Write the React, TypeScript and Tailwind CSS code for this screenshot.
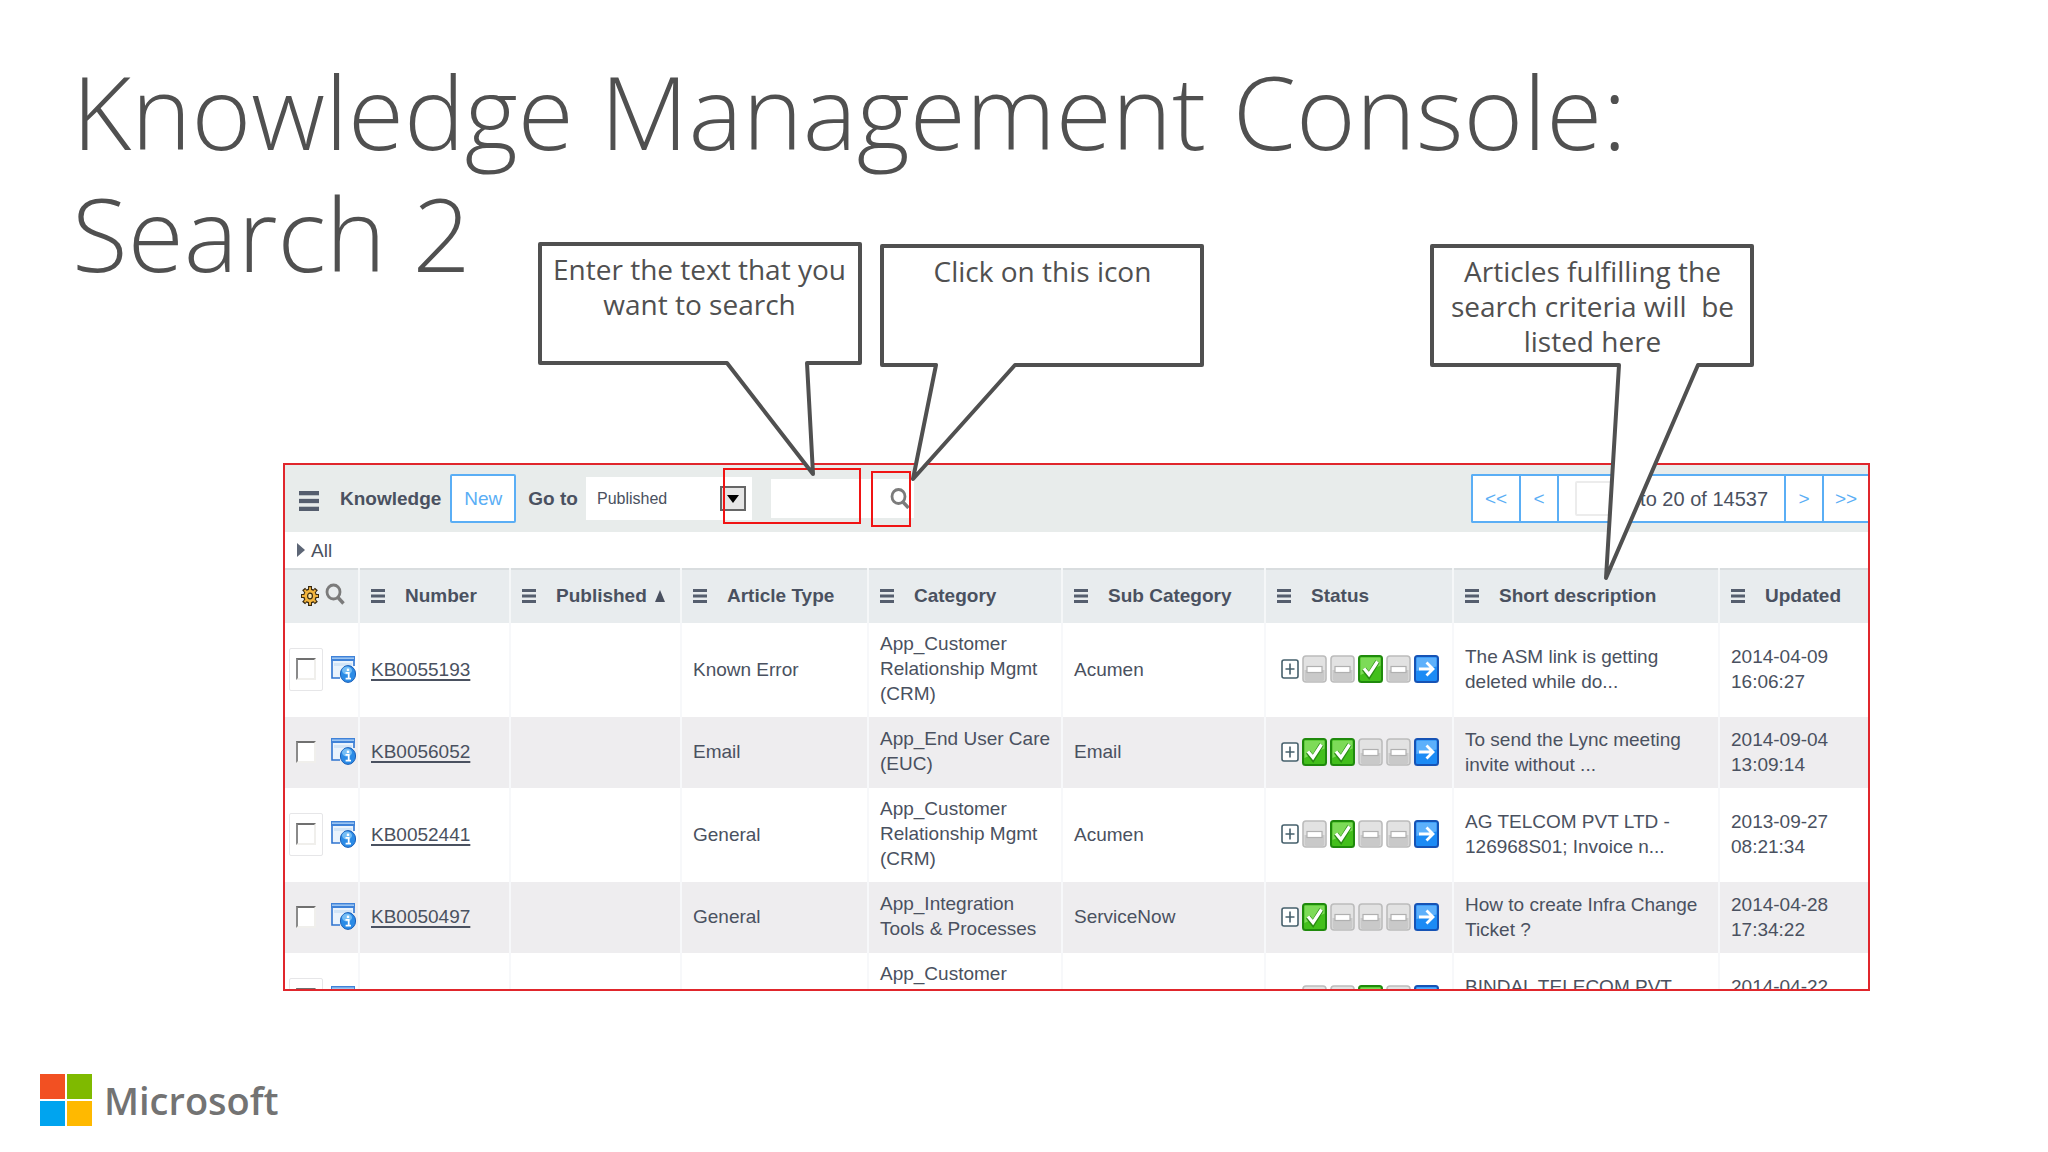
import type { ReactNode } from 'react';

type Step = 'done' | 'skip' | 'next';

const columns = [
  { label: 'Number', width: 'w-[151px]' },
  { label: 'Published', width: 'w-[171px]', sorted: true },
  { label: 'Article Type', width: 'w-[187px]' },
  { label: 'Category', width: 'w-[194px]' },
  { label: 'Sub Category', width: 'w-[203px]' },
  { label: 'Status', width: 'w-[188px]' },
  { label: 'Short description', width: '' },
  { label: 'Updated', width: 'w-[149px]' },
];

const articles: {
  id: string;
  type: string;
  category: string[];
  sub: string;
  steps: Step[];
  description: string[];
  updated: string[];
}[] = [
  {
    id: 'KB0055193',
    type: 'Known Error',
    category: ['App_Customer', 'Relationship Mgmt', '(CRM)'],
    sub: 'Acumen',
    steps: ['skip', 'skip', 'done', 'skip', 'next'],
    description: ['The ASM link is getting', 'deleted while do...'],
    updated: ['2014-04-09', '16:06:27'],
  },
  {
    id: 'KB0056052',
    type: 'Email',
    category: ['App_End User Care', '(EUC)'],
    sub: 'Email',
    steps: ['done', 'done', 'skip', 'skip', 'next'],
    description: ['To send the Lync meeting', 'invite without ...'],
    updated: ['2014-09-04', '13:09:14'],
  },
  {
    id: 'KB0052441',
    type: 'General',
    category: ['App_Customer', 'Relationship Mgmt', '(CRM)'],
    sub: 'Acumen',
    steps: ['skip', 'done', 'skip', 'skip', 'next'],
    description: ['AG TELCOM PVT LTD -', '126968S01; Invoice n...'],
    updated: ['2013-09-27', '08:21:34'],
  },
  {
    id: 'KB0050497',
    type: 'General',
    category: ['App_Integration', 'Tools & Processes'],
    sub: 'ServiceNow',
    steps: ['done', 'skip', 'skip', 'skip', 'next'],
    description: ['How to create Infra Change', 'Ticket ?'],
    updated: ['2014-04-28', '17:34:22'],
  },
  {
    id: '',
    type: '',
    category: ['App_Customer', '', ''],
    sub: '',
    steps: ['skip', 'skip', 'done', 'skip', 'next'],
    description: ['BINDAL TELECOM PVT', ''],
    updated: ['2014-04-22', ''],
  },
];

const MenuIcon = ({ className }: { className: string }) => (
  <svg viewBox="0 0 14 14" preserveAspectRatio="none" className={className} fill="#555e6e" aria-hidden="true">
    <rect width="14" height="3" />
    <rect y="5.5" width="14" height="3" />
    <rect y="11" width="14" height="3" />
  </svg>
);

const SearchIcon = ({ className }: { className: string }) => (
  <svg viewBox="0 0 20 21" className={className} fill="none" stroke="#7b7b7b" aria-hidden="true">
    <ellipse cx="8.5" cy="8.5" rx="6.5" ry="7" strokeWidth="2.8" />
    <path d="M13 14l5.5 6" strokeWidth="3.4" />
  </svg>
);

const GearIcon = () => (
  <svg viewBox="0 0 18 20" className="h-5 w-[18px]" aria-hidden="true">
    <g stroke="#3a2a10" strokeWidth="4">
      <path d="M9 0v20M0 10h18M2.6 3l12.8 14M15.4 3L2.6 17" />
    </g>
    <ellipse cx="9" cy="10" rx="6.8" ry="7.6" fill="#3a2a10" />
    <g stroke="#eeb03c" strokeWidth="2">
      <path d="M9 1.2v17.6M1 10h16M3.5 4l11 12M14.5 4l-11 12" />
    </g>
    <ellipse cx="9" cy="10" rx="5.6" ry="6.2" fill="#f3b63f" />
    <ellipse cx="9" cy="10" rx="2.4" ry="2.8" fill="#f9e3a4" stroke="#3a2a10" strokeWidth="1.2" />
  </svg>
);

const InfoIcon = () => (
  <svg viewBox="0 0 25 27" className="h-[27px] w-[25px] shrink-0" aria-hidden="true">
    <rect x="1" y="1" width="22" height="21" fill="#eaf3fc" />
    <path d="M1 1v21h8M23 1v9" fill="none" stroke="#2f74d0" strokeWidth="1.6" />
    <rect width="24" height="5" fill="#3f82d8" />
    <rect x="1" y="1.4" width="22" height="1.6" fill="#9cc6f2" />
    <rect x="3" y="7" width="18" height="3" fill="#d3e5f7" />
    <ellipse cx="17" cy="18" rx="7.6" ry="8.4" fill="#2b8be6" stroke="#1b5fb8" strokeWidth="1" />
    <ellipse cx="16" cy="14.5" rx="5" ry="4" fill="#74bdf5" />
    <path d="M14.5 16.8h3.2v5.4M14.6 22.6h5.4" fill="none" stroke="#fff" strokeWidth="1.8" />
    <rect x="15.8" y="12.6" width="2.4" height="2.4" fill="#fff" />
  </svg>
);

const StepIcon = ({ step }: { step: Step }) => (
  <svg viewBox="0 0 25 28" className="h-7 w-[25px]" aria-hidden="true">
    {step === 'skip' && (
      <>
        <rect x="1" y="1" width="23" height="26" rx="3" fill="#e2e2e2" stroke="#bcbcbc" strokeWidth="1.6" />
        <path d="M2.5 15h20v9a2 2 0 0 1-2 2h-16a2 2 0 0 1-2-2z" fill="#c9c9c9" />
        <rect x="5" y="11.5" width="15" height="6" fill="#fff" stroke="#b0b0b0" strokeWidth="1.2" />
      </>
    )}
    {step === 'done' && (
      <>
        <rect x="1" y="1" width="23" height="26" rx="2.5" fill="#43bf1c" stroke="#1f8a0c" strokeWidth="2" />
        <path d="M2.5 2.5h20v8L2.5 20z" fill="#7ddb58" />
        <path d="M6 14l5 6.5L19.5 6.5" fill="none" stroke="#2a8c14" strokeWidth="5" />
        <path d="M6 13.5l5 6L19.5 6.5" fill="none" stroke="#fff" strokeWidth="3.2" />
      </>
    )}
    {step === 'next' && (
      <>
        <rect x="1" y="1" width="23" height="26" rx="2.5" fill="#1c8bf5" stroke="#1653b5" strokeWidth="2" />
        <path d="M2.5 2.5h20v9L2.5 16z" fill="#5db0fb" />
        <path d="M5 14h13M12.5 7.5l6.5 6.5-6.5 6.5" fill="none" stroke="#fff" strokeWidth="2.8" />
      </>
    )}
  </svg>
);

const ExpandIcon = () => (
  <svg viewBox="0 0 18 20" className="h-5 w-[18px]" fill="#fff" stroke="#46606c" aria-hidden="true">
    <rect x="1" y="1" width="16" height="18" rx="2" strokeWidth="1.6" />
    <path d="M9 4.5v11M4.5 10h9" strokeWidth="1.6" />
  </svg>
);

const Lines = ({ text }: { text: string[] }) => (
  <>
    {text.map((line, i) => (
      <span key={i} className="block min-h-[25px] whitespace-nowrap">
        {line}
      </span>
    ))}
  </>
);

const Callout = ({
  className,
  outline,
  height,
  children,
}: {
  className: string;
  outline: string;
  height: number;
  children: ReactNode;
}) => (
  <div className={`absolute w-[325px] ${className}`}>
    <svg width="325" height={height} className="absolute left-0 top-0" aria-hidden="true">
      <path d={outline} fill="#fff" stroke="#505050" strokeWidth="4" strokeLinejoin="round" />
    </svg>
    <p className="relative whitespace-pre pt-[10px] text-center font-['Open_Sans','Noto_Sans',sans-serif] text-[28px] leading-[35px] text-[#505050]">
      {children}
    </p>
  </div>
);

const Toolbar = () => (
  <div className="flex h-[67px] items-center bg-[#e8eceb] pl-[14px]">
    <button type="button" aria-label="List menu" className="mr-[21px] mt-1">
      <MenuIcon className="h-5 w-5" />
    </button>
    <h2 className="mr-[9px] font-bold">Knowledge</h2>
    <button
      type="button"
      className="mr-3 h-[49px] w-[66px] rounded-xs border-2 border-[#5aaef5] bg-white text-[#5aaef5]"
    >
      New
    </button>
    <label htmlFor="goto" className="mr-2 font-bold">
      Go to
    </label>
    <div className="relative mr-[19px]">
      <select id="goto" className="h-[43px] w-[166px] appearance-none bg-white pl-[11px] text-base">
        <option>Published</option>
      </select>
      <span className="pointer-events-none absolute right-1.5 top-[9px] flex h-[25px] w-[26px] items-center justify-center border-2 border-[#666] bg-[#e6e6e6]">
        <svg viewBox="0 0 12 8" className="h-2 w-3" aria-hidden="true">
          <path d="M0 0h12L6 8z" />
        </svg>
      </span>
    </div>
    <div className="flex h-[39px] w-[143px] items-center bg-white pr-1">
      <input aria-label="Search text" className="h-full min-w-0 flex-1 px-2 outline-none" />
      <button type="button" aria-label="Search">
        <SearchIcon className="h-[21px] w-5" />
      </button>
    </div>
    <nav className="ml-auto flex h-[49px] items-stretch divide-x-2 divide-[#5aaef5] rounded-l-xs border-2 border-r-0 border-[#5aaef5] bg-white text-[#5aaef5]">
      <button type="button" className="w-12">
        &lt;&lt;
      </button>
      <button type="button" className="w-[38px]">
        &lt;
      </button>
      <label className="flex w-[227px] items-center justify-between pl-4 pr-4 text-xl text-[#4a5160]">
        <input aria-label="First row" className="h-[35px] w-[60px] rounded-xs border-2 border-[#ececec]" />
        to 20 of 14537
      </label>
      <button type="button" className="w-[38px]">
        &gt;
      </button>
      <button type="button" className="w-11">
        &gt;&gt;
      </button>
    </nav>
  </div>
);

const ArticleTable = () => (
  <table className="w-full table-fixed border-collapse">
    <thead>
      <tr className="h-[54px] border-t-2 border-[#d9dddf] bg-[#e8ecee] [&>th]:pb-0.5">
        <th scope="col" className="w-[74px] pl-4">
          <span className="flex items-center gap-1.5">
            <GearIcon />
            <SearchIcon className="-mt-1 h-[22px] w-5" />
          </span>
        </th>
        {columns.map((column) => (
          <th key={column.label} scope="col" className={`border-l-2 border-[#f5f7f8] pl-[11px] text-left ${column.width}`}>
            <span className="flex items-center whitespace-nowrap">
              <MenuIcon className="mr-5 h-[14px] w-[14px] shrink-0" />
              {column.label}
              {column.sorted && (
                <svg viewBox="0 0 10 12" className="ml-2 h-3 w-2.5" fill="#4a5160" aria-hidden="true">
                  <path d="M5 0l5 12H0z" />
                </svg>
              )}
            </span>
          </th>
        ))}
      </tr>
    </thead>
    <tbody>
      {articles.map((article, index) => (
        <tr
          key={index}
          className="h-[71px] odd:bg-white even:bg-[#eeedef] [&>td]:pb-0.5 [&>td+td]:border-l-2 [&>td+td]:border-[#f7f8fa] [&>td+td]:pl-[11px]"
        >
          <td className="pl-1">
            <span className="flex items-center gap-2">
              <span
                className={`flex h-[43px] w-[34px] shrink-0 items-center justify-center rounded-xs border ${
                  index % 2 === 0 ? 'border-[#e6e6e8]' : 'border-transparent'
                }`}
              >
                <input
                  type="checkbox"
                  aria-label={`Select ${article.id}`}
                  className="h-[22px] w-5 appearance-none border-2 border-b-[#f0efec] border-l-[#8a8a8a] border-r-[#f0efec] border-t-[#707070] bg-white"
                />
              </span>
              <InfoIcon />
            </span>
          </td>
          <td>
            {article.id && (
              <a href={`#${article.id}`} className="underline decoration-2 underline-offset-3">
                {article.id}
              </a>
            )}
          </td>
          <td />
          <td>{article.type}</td>
          <td>
            <div className="pb-[9px] pt-2">
              <Lines text={article.category} />
            </div>
          </td>
          <td>{article.sub}</td>
          <td>
            <span className="flex items-center gap-[3px] pl-1">
              <ExpandIcon />
              {article.steps.map((step, i) => (
                <StepIcon key={i} step={step} />
              ))}
            </span>
          </td>
          <td>
            <Lines text={article.description} />
          </td>
          <td>
            <Lines text={article.updated} />
          </td>
        </tr>
      ))}
    </tbody>
  </table>
);

const Logo = () => (
  <div className="flex items-center gap-3">
    <div className="grid grid-cols-2 gap-[2px]">
      <div className="size-[25px] bg-[#f25022]" />
      <div className="size-[25px] bg-[#7fba00]" />
      <div className="size-[25px] bg-[#00a4ef]" />
      <div className="size-[25px] bg-[#ffb900]" />
    </div>
    <span className="font-['Open_Sans','Noto_Sans',sans-serif] text-[38px] font-semibold leading-[52px] text-[#737373]">
      Microsoft
    </span>
  </div>
);

export default function App() {
  return (
    <div className="flex min-h-screen flex-col overflow-x-hidden bg-white">
      <h1 className="px-[72px] pt-[50px] font-['Open_Sans','Noto_Sans',sans-serif] text-[102px] font-light leading-[122px] text-[#505050]">
        Knowledge Management Console:
        <br />
        Search 2
      </h1>

      <main className="relative ml-[283px] mr-[178px] mt-[169px] font-['Liberation_Sans',Arial,sans-serif] text-[19px] leading-[25px] text-[#4a5160]">
        <section className="h-[528px] overflow-hidden border-2 border-[#e0262c]">
          <Toolbar />
          <div className="flex h-9 items-center gap-1.5 pl-3">
            <svg viewBox="0 0 8 14" className="h-[14px] w-2" fill="#5d6676" aria-hidden="true">
              <path d="M0 0l8 7-8 7z" />
            </svg>
            All
          </div>
          <ArticleTable />
        </section>

        {/* highlighted controls */}
        <div className="pointer-events-none absolute left-[440px] top-[5px] h-[56px] w-[138px] border-2 border-[#f01414]" />
        <div className="pointer-events-none absolute left-[588px] top-[8px] h-[56px] w-10 border-2 border-[#f01414]" />

        <Callout
          className="left-[254px] top-[-221px]"
          height={240}
          outline="M3 2H323V121H270L276 232L190 121H3z"
        >
          {'Enter the text that you\nwant to search'}
        </Callout>
        <Callout
          className="left-[597px] top-[-219px]"
          height={240}
          outline="M2 2H322V121H135L33 235L56 121H2z"
        >
          {'Click on this icon'}
        </Callout>
        <Callout
          className="right-[115px] top-[-219px]"
          height={340}
          outline="M2 2H322V121H268L176 334L189 121H2z"
        >
          {'Articles fulfilling the\nsearch criteria will  be\nlisted here'}
        </Callout>
      </main>

      <footer className="mt-[83px] pl-10">
        <Logo />
      </footer>
    </div>
  );
}
